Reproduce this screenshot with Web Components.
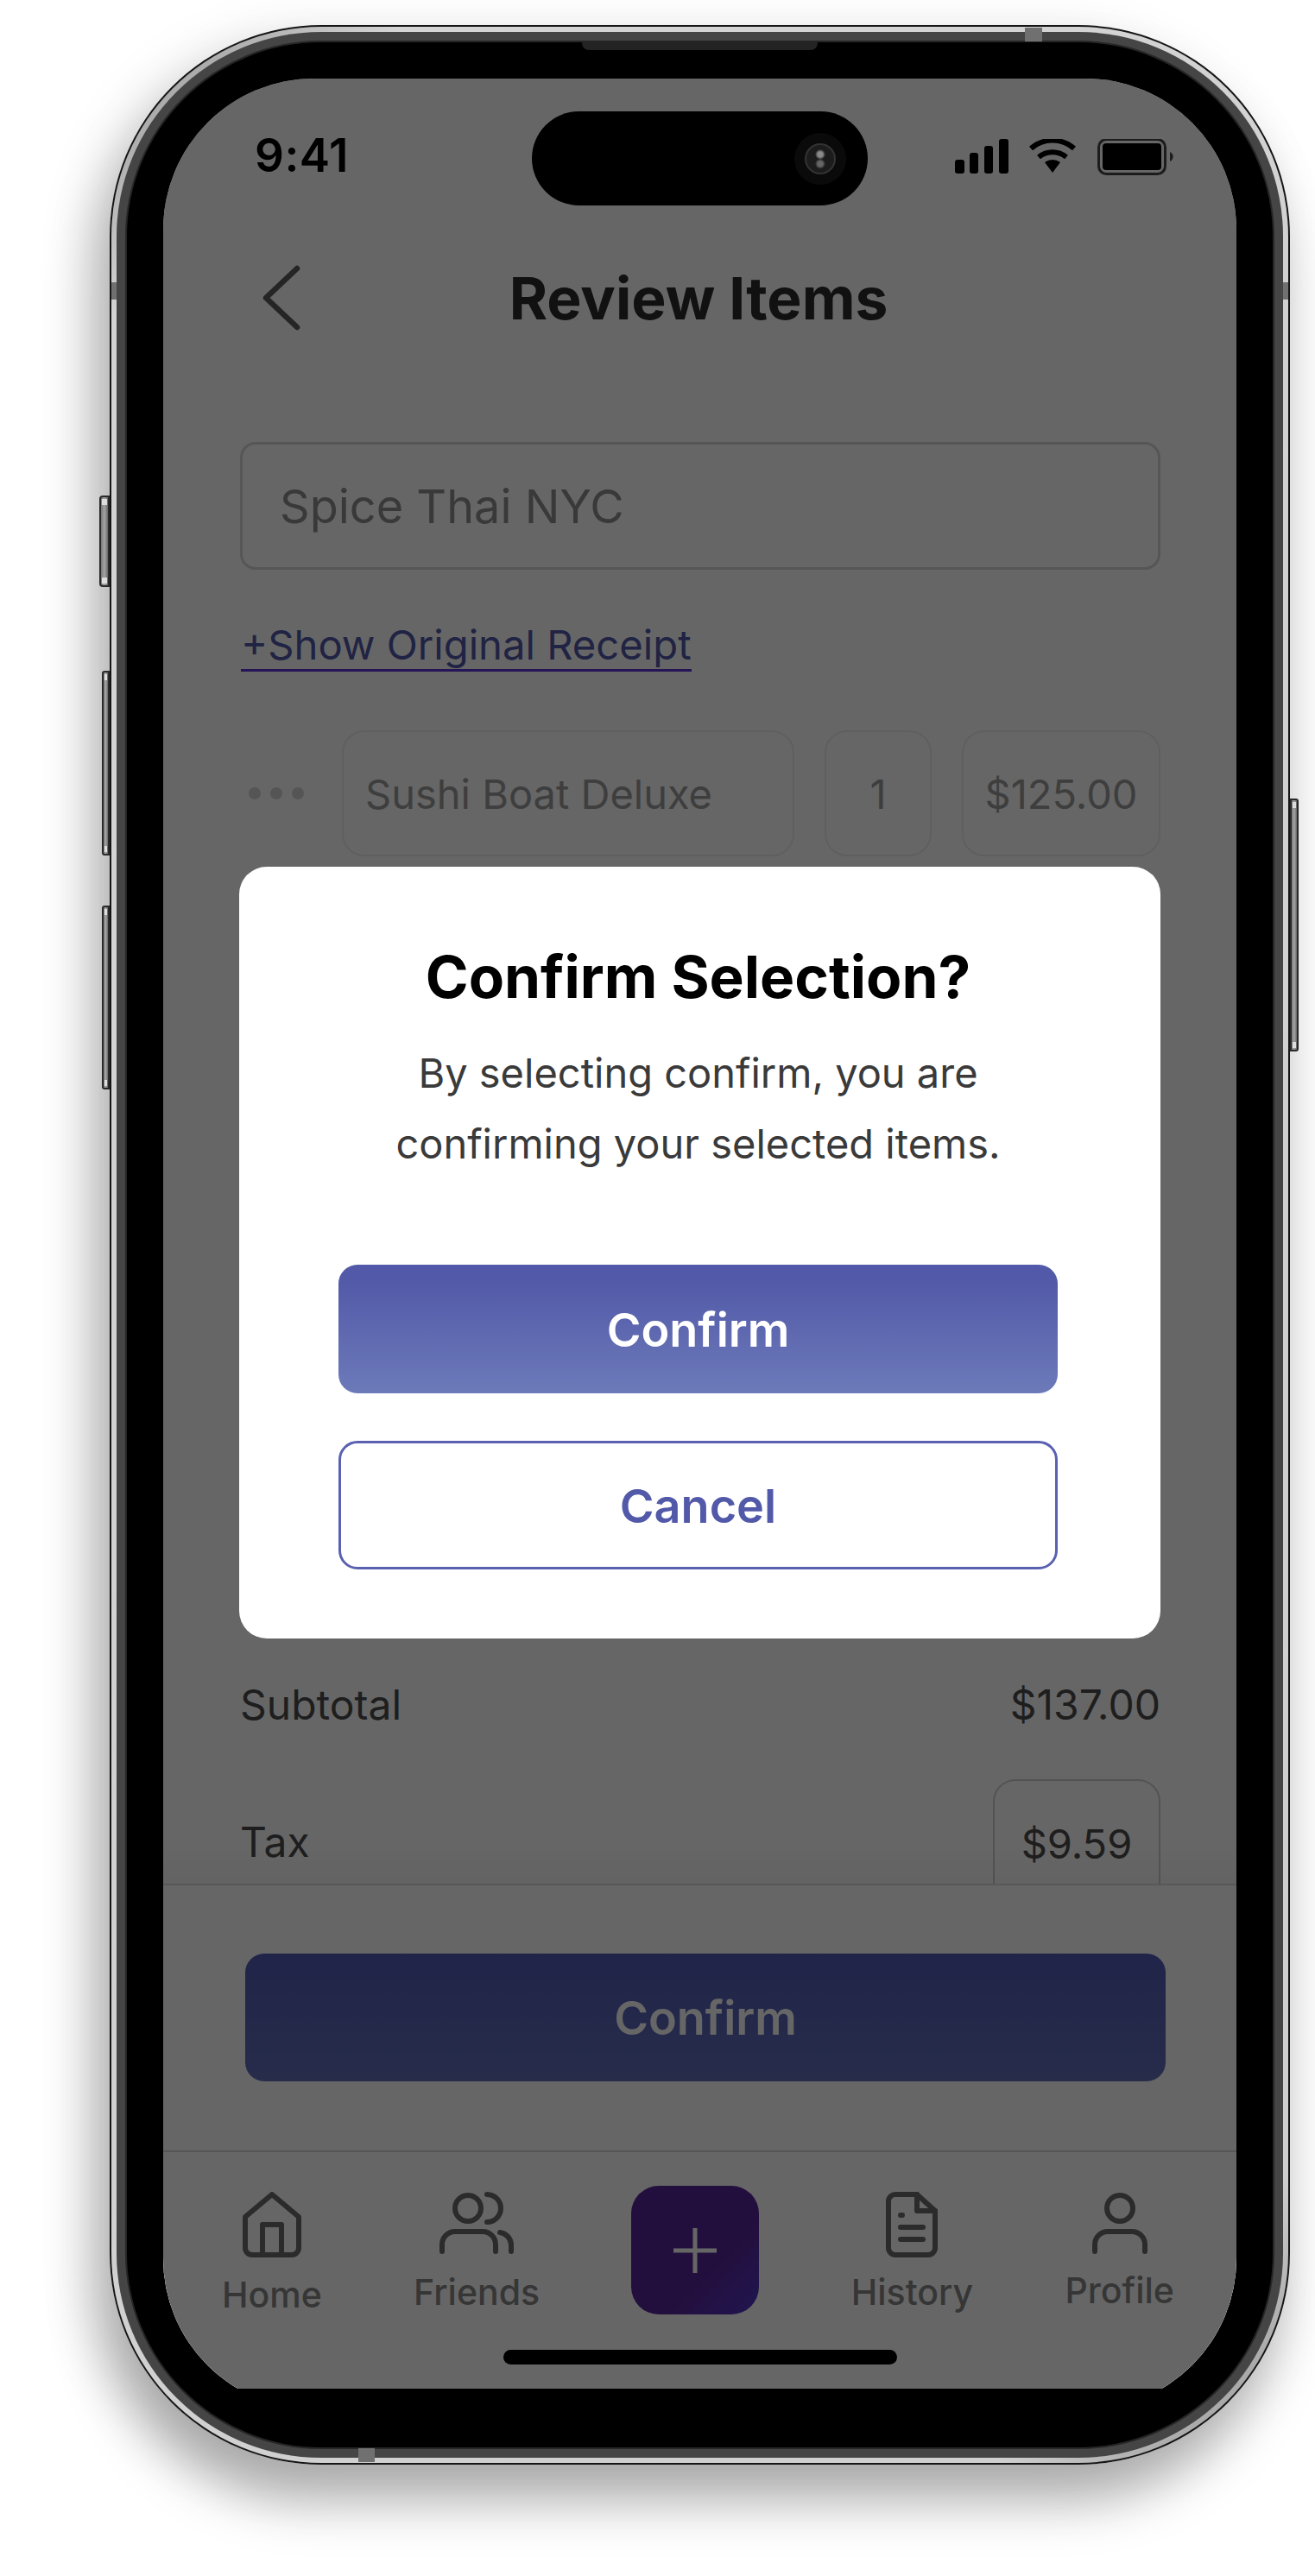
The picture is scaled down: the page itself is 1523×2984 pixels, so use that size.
<!DOCTYPE html>
<html lang="en">
<head>
<meta charset="utf-8">
<title>Review Items</title>
<style>
  html, body { margin: 0; background: #fff; }
  body { font-family: Inter, "Noto Sans", sans-serif; width: 1523px; height: 2984px; overflow: hidden; }
</style>
</head>
<body>
<phone-frame>
  <status-bar></status-bar>
  <nav-header title="Review Items"></nav-header>
  <receipt-form>
    <text-field>Spice Thai NYC</text-field>
    <show-link>+Show Original Receipt</show-link>
    <line-item name="Sushi Boat Deluxe" qty="1" price="$125.00"></line-item>
    <summary-row label="Subtotal" value="$137.00" style="margin-top:955px"></summary-row>
    <summary-row label="Tax" value="$9.59" boxed style="margin-top:58px"></summary-row>
  </receipt-form>
  <confirm-footer>Confirm</confirm-footer>
  <tab-bar>
    <tab-item icon="home" label="Home" style="--label-gap:23px"></tab-item>
    <tab-item icon="friends" label="Friends" style="--label-gap:20px"></tab-item>
    <add-button></add-button>
    <tab-item icon="history" label="History" style="--label-gap:20px"></tab-item>
    <tab-item icon="profile" label="Profile" style="--label-gap:18px"></tab-item>
  </tab-bar>
  <confirm-dialog slot="overlay" heading="Confirm Selection?">
    By selecting confirm, you are<br>confirming your selected items.
  </confirm-dialog>
</phone-frame>

<script>
"use strict";

const ICONS = {
  home: `<svg width="68" height="76" viewBox="0 0 68 76" fill="none" stroke="currentColor" stroke-width="6" stroke-linejoin="round" stroke-linecap="round">
      <path d="M3 29 34 3l31 26v36a8 8 0 0 1-8 8H11a8 8 0 0 1-8-8z"/><path d="M23 73V38h22v35"/></svg>`,
  friends: `<svg width="86" height="72" viewBox="0 0 86 72" fill="none" stroke="currentColor" stroke-width="6" stroke-linecap="round">
      <circle cx="33" cy="19" r="15"/><path d="M55 3a16 16 0 0 1 0 32"/><path d="M3 69v-8a15 15 0 0 1 15-15h32a15 15 0 0 1 15 15v8"/><path d="M70 47a15 15 0 0 1 13 14v8"/></svg>`,
  history: `<svg width="60" height="76" viewBox="0 0 60 76" fill="none" stroke="currentColor" stroke-width="6" stroke-linejoin="round" stroke-linecap="round">
      <path d="M36 3H11a8 8 0 0 0-8 8v54a8 8 0 0 0 8 8h38a8 8 0 0 0 8-8V22z"/><path d="M36 3v19h21"/><path d="M17 27h2M17 41h26M17 55h26"/></svg>`,
  profile: `<svg width="64" height="72" viewBox="0 0 64 72" fill="none" stroke="currentColor" stroke-width="6" stroke-linecap="round">
      <circle cx="32" cy="19" r="15"/><path d="M3 69v-8a15 15 0 0 1 15-15h28a15 15 0 0 1 15 15v8"/></svg>`,
};

// small helper, every element below does the same thing in its constructor
class ShadowEl extends HTMLElement {
  constructor() {
    super();
    this._root = this.attachShadow({ mode: "open" });
    this._root.innerHTML = `<style>${this._style}</style>${this._template}`;
  }
  get _style() { return ""; }
  get _template() { return "<slot></slot>"; }
  _attr(name) { return this.getAttribute(name) || ""; }
}

class PhoneFrame extends ShadowEl {
  get _style() {
    return /*css*/ `
      :host { display: block; position: relative; width: 1367px; height: 2826px; margin: 29px 0 0 127px; border-radius: 245px;
        box-shadow: -12px 44px 60px rgba(0,0,0,.27), -20px 16px 66px rgba(0,0,0,.12); }
      .edge { height: 100%; box-sizing: border-box; padding: 2px; border-radius: 245px; background: #151515; }
      .steel { height: 100%; box-sizing: border-box; padding: 6px; border-radius: 243px;
        background: linear-gradient(135deg, #8c8c8c 0, #d4d4d4 8%, #cfcfcf 92%, #8c8c8c 100%); }
      .band { height: 100%; box-sizing: border-box; padding: 10px; border-radius: 237px; background: #454545; }
      .rim { height: 100%; box-sizing: border-box; padding: 2px; border-radius: 227px; background: #262626; }
      .bezel { height: 100%; box-sizing: border-box; padding: 42px 42px 68px; border-radius: 225px; background: #000; }
      .clip { position: relative; height: 100%; overflow: hidden; }
      .screen { position: relative; height: 2700px; border-radius: 175px; overflow: hidden; background: #fff;
        display: flex; flex-direction: column; }
      .dim { position: absolute; inset: 0; background: rgba(0,0,0,.6); display: flex; align-items: flex-start; padding: 913px 88px 0 88px; }
      .speaker { position: absolute; left: 547px; top: 19px; width: 273px; height: 10px; background: #232323; border-radius: 0 0 8px 8px; }
      .island { position: absolute; left: 489px; top: 100px; width: 389px; height: 109px; border-radius: 55px; background: #000; }
      .lens { position: absolute; left: 318px; top: 39px; width: 32px; height: 32px; border-radius: 50%;
        background: radial-gradient(circle at 50% 34%, #8a8a8a 0 3px, transparent 6px), radial-gradient(circle at 50% 68%, #666 0 3px, transparent 6px), #1c1c1c;
        box-shadow: 0 0 0 2px #333, 0 0 0 14px #0a0a0a; }
      .pill { position: absolute; left: 394px; top: 2631px; width: 456px; height: 17px; border-radius: 9px; background: #000; }
      .notch { position: absolute; background: #707070; }
      .key { position: absolute; box-sizing: border-box; border: 2px solid #2a2a2a; background: linear-gradient(90deg, #777, #a5a5a5 50%, #666); }
      .key::before, .key::after { content: ""; position: absolute; left: 1px; right: 1px; height: 7px; background: #ddd; }
      .key::before { top: 2px; } .key::after { bottom: 2px; }
    `;
  }
  get _template() {
    return /*html*/ `
      <i class="key" style="left:-12px;top:545px;width:12px;height:106px;border-radius:4px 0 0 4px"></i>
      <i class="key" style="left:-9px;top:748px;width:9px;height:214px;border-radius:3px 0 0 3px"></i>
      <i class="key" style="left:-9px;top:1020px;width:9px;height:213px;border-radius:3px 0 0 3px"></i>
      <i class="key" style="right:-10px;top:896px;width:10px;height:293px;border-radius:0 3px 3px 0"></i>
      <div class="edge"><div class="steel"><div class="band"><div class="rim"><div class="bezel">
        <div class="clip">
          <div class="screen">
            <slot></slot>
            <div class="dim"><slot name="overlay"></slot></div>
            <div class="pill"></div>
          </div>
        </div>
      </div></div></div></div></div>
      <i class="notch" style="left:2px;top:298px;width:6px;height:20px"></i>
      <i class="notch" style="right:2px;top:298px;width:6px;height:20px"></i>
      <i class="notch" style="left:1060px;top:3px;width:20px;height:16px"></i>
      <i class="notch" style="left:288px;bottom:3px;width:19px;height:16px"></i>
      <div class="speaker"></div>
      <div class="island"><div class="lens"></div></div>
    `;
  }
}

class StatusBar extends ShadowEl {
  get _style() {
    return /*css*/ `
      :host { display: flex; flex: none; height: 204px; box-sizing: border-box; padding: 70px 70px 0 106px; justify-content: space-between; align-items: flex-start; color: #000; }
      .time { font-size: 53px; line-height: 38px; font-weight: 600; letter-spacing: .5px; }
      svg { display: block; margin-right: 1px; }
    `;
  }
  get _template() {
    return /*html*/ `
      <span class="time">9:41</span>
      <svg width="256" height="42" viewBox="0 0 256 42">
        <rect x="1" y="24" width="11" height="16" rx="3"/><rect x="18" y="16" width="10" height="24" rx="3"/><rect x="35" y="8" width="10" height="32" rx="3"/><rect x="52" y="0" width="11" height="40" rx="3"/>
        <path d="M114 39 105 27a15 15 0 0 1 18 0z"/>
        <path d="M98 21a25 25 0 0 1 32 0" fill="none" stroke="#000" stroke-width="6"/>
        <path d="M89 11a38 38 0 0 1 50 0" fill="none" stroke="#000" stroke-width="6"/>
        <rect x="167.500" y="0.500" width="77" height="40" rx="9" fill="none" stroke="#474747" stroke-width="3"/>
        <rect x="172" y="5" width="68" height="31" rx="4"/>
        <path d="M250 15a6 6 0 0 1 0 11z" fill="#4d4d4d"/>
      </svg>
    `;
  }
}

class NavHeader extends ShadowEl {
  get _style() {
    return /*css*/ `
      :host { display: grid; flex: none; grid-template-columns: 1fr auto 1fr; align-items: center; height: 100px; color: #2b2b2b; }
      svg { margin-left: 115px; display: block; }
      h1 { margin: 0 3px 0 0; font-size: 67.700px; font-weight: 700; line-height: 100px; }
    `;
  }
  get _template() {
    return /*html*/ `
      <svg width="44" height="76" viewBox="0 0 44 76" fill="none" stroke="#5c5c5c" stroke-width="6.500" stroke-linecap="round" stroke-linejoin="round"><path d="M40 4 4 38l36 34"/></svg>
      <h1>${this._attr("title")}</h1>
      <span></span>
    `;
  }
}

class ReceiptForm extends ShadowEl {
  get _style() {
    return `:host { display: block; flex: none; height: 1787px; box-sizing: border-box; padding: 117px 88px 0 89px; overflow: hidden; }`;
  }
}

class TextField extends ShadowEl {
  get _style() {
    return /*css*/ `
      :host { display: flex; align-items: center; height: 148px; box-sizing: border-box; padding: 0 43px; border: 3px solid #d6d6d6; border-radius: 18px;
        font-size: 54px; color: #8e8e8e; }
    `;
  }
}

class ShowLink extends ShadowEl {
  get _style() {
    return /*css*/ `
      :host { display: block; width: max-content; margin: 59px 0 0 1px; font-size: 47.200px; line-height: 56px; color: #5259a8; border-bottom: 3px solid #5f36d6; }
    `;
  }
}

class LineItem extends ShadowEl {
  get _style() {
    return /*css*/ `
      :host { display: flex; align-items: stretch; height: 146px; margin-top: 68px; font-size: 47px; color: #9c9c9c; }
      .dots { display: flex; flex: none; width: 118px; box-sizing: border-box; padding-left: 10px; gap: 11px; align-items: center; }
      .dots i { width: 14px; height: 14px; border-radius: 50%; background: #d4d4d4; }
      .box { display: flex; align-items: center; box-sizing: border-box; padding-top: 1px; border: 2px solid #eee; border-radius: 26px; }
      .name { width: 524px; padding-left: 25px; }
      .qty { width: 124px; margin-left: 35px; justify-content: center; }
      .price { width: 230px; margin-left: 35px; justify-content: center; }
    `;
  }
  get _template() {
    return /*html*/ `
      <div class="dots"><i></i><i></i><i></i></div>
      <div class="box name">${this._attr("name")}</div>
      <div class="box qty">${this._attr("qty")}</div>
      <div class="box price">${this._attr("price")}</div>
    `;
  }
}

class SummaryRow extends ShadowEl {
  get _style() {
    return /*css*/ `
      :host { display: flex; justify-content: space-between; align-items: center; font-size: 48px; line-height: 56px; color: #4d4d4d; }
      :host([boxed]) > span:first-child { padding-top: 5px; }
      .boxed { display: flex; align-items: center; justify-content: center; width: 194px; height: 146px; padding-top: 4px; box-sizing: border-box; border: 2px solid #d0d0d0; border-radius: 26px; font-size: 47px; }
    `;
  }
  get _template() {
    const cls = this.hasAttribute("boxed") ? "boxed" : "";
    return `<span>${this._attr("label")}</span><span class="${cls}">${this._attr("value")}</span>`;
  }
}

class ConfirmFooter extends ShadowEl {
  get _style() {
    return /*css*/ `
      :host { display: block; flex: none; position: relative; height: 309px; box-sizing: border-box; padding: 79px 82px 0 95px; border-top: 2px solid #dcdcdc; background: #fff; }
      :host::before { content: ""; position: absolute; left: 0; right: 0; top: -50px; height: 48px; background: linear-gradient(transparent, rgba(0,0,0,.03)); }
      div { display: flex; align-items: center; justify-content: center; height: 148px; border-radius: 22px; font-size: 54px; font-weight: 600; color: #fff;
        background: linear-gradient(#515bb6, #626fbc); }
    `;
  }
  get _template() {
    return `<div><slot></slot></div>`;
  }
}

class TabBar extends ShadowEl {
  get _style() {
    return /*css*/ `
      :host { display: flex; flex: 1; justify-content: space-between; align-items: flex-start; box-sizing: border-box; padding: 39px 72px 0 68px; border-top: 2px solid #d8d8d8; background: #fff; }
    `;
  }
}

class TabItem extends ShadowEl {
  get _style() {
    return /*css*/ `
      :host { display: flex; flex-direction: column; align-items: center; padding-top: 7px; color: #6c6c6c; }
      .ic { display: flex; align-items: flex-start; justify-content: center; height: 76px; }
      svg { display: block; }
      span { margin-top: var(--label-gap, 20px); font-size: 41px; font-weight: 500; line-height: 40px; color: #888; }
    `;
  }
  get _template() {
    return `<div class="ic">${ICONS[this._attr("icon")]}</div><span>${this._attr("label")}</span>`;
  }
}

class AddButton extends ShadowEl {
  get _style() {
    return /*css*/ `
      :host { display: flex; align-items: center; justify-content: center; width: 148px; height: 149px; border-radius: 32px;
        background: linear-gradient(135deg, #582698 62%, #503cd8 112%); }
    `;
  }
  get _template() {
    return `<svg width="50" height="52" viewBox="0 0 50 52" stroke="#fff" stroke-width="5"><path d="M25 0v52M0 26h50"/></svg>`;
  }
}

class ConfirmDialog extends ShadowEl {
  get _style() {
    return /*css*/ `
      :host { display: block; flex: 1; height: 894px; box-sizing: border-box; padding: 87px 119px 0 115px; border-radius: 32px; background: #fff; text-align: center; }
      h2 { margin: 0 -30px; font-size: 67.500px; line-height: 82px; font-weight: 700; color: #000; white-space: nowrap; }
      p { margin: 29px -60px 0; font-size: 47px; line-height: 82px; color: #3a3a3a; }
      button { display: block; width: 100%; height: 149px; box-sizing: border-box; padding-top: 3px; border-radius: 22px; font: 600 54px Inter, sans-serif; }
      .ok { margin-top: 99px; border: 0; color: #fff; background: linear-gradient(#5259a8 10%, #6c7ab9); }
      .no { margin-top: 55px; border: 3px solid #5a61b0; color: #5259a8; background: #fff; }
    `;
  }
  get _template() {
    return /*html*/ `
      <h2>${this._attr("heading")}</h2>
      <p><slot></slot></p>
      <button class="ok">Confirm</button>
      <button class="no">Cancel</button>
    `;
  }
}

customElements.define("phone-frame", PhoneFrame);
customElements.define("status-bar", StatusBar);
customElements.define("nav-header", NavHeader);
customElements.define("receipt-form", ReceiptForm);
customElements.define("text-field", TextField);
customElements.define("show-link", ShowLink);
customElements.define("line-item", LineItem);
customElements.define("summary-row", SummaryRow);
customElements.define("confirm-footer", ConfirmFooter);
customElements.define("tab-bar", TabBar);
customElements.define("tab-item", TabItem);
customElements.define("add-button", AddButton);
customElements.define("confirm-dialog", ConfirmDialog);
</script>
</body>
</html>
